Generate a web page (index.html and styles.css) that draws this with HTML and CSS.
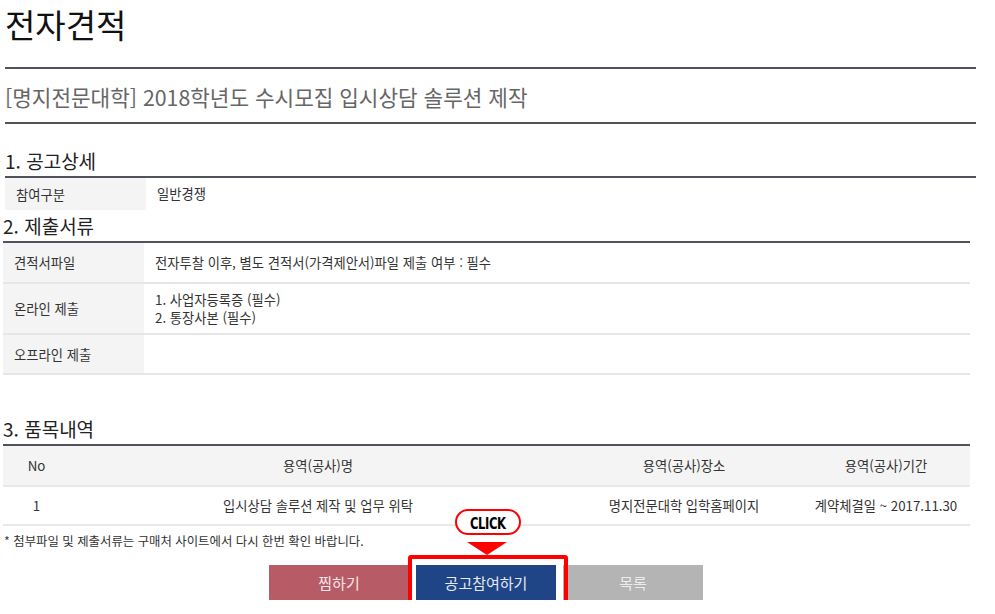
FILE: index.html
```
<!DOCTYPE html>
<html lang="ko">
	<head>
		<meta charset="utf-8" />
		<meta name="viewport" content="width=device-width, initial-scale=1.0" />
		<title>전자견적</title>
		<link rel="stylesheet" href="styles.css">
	</head>

	<body>
		<div class="page">
			<h1 class="title">전자견적</h1>
			<div class="subject">[명지전문대학] 2018학년도 수시모집 입시상담 솔루션 제작</div>

			<!-- 1. 공고상세 -->
			<section class="sec sec1">
				<h2>1. 공고상세</h2>
				<div class="row row-plain">
					<div class="label">참여구분</div>
					<div class="value">일반경쟁</div>
				</div>
			</section>

			<!-- 2. 제출서류 -->
			<section class="sec sec2">
				<h2>2. 제출서류</h2>
				<div class="row r1">
					<div class="label">견적서파일</div>
					<div class="value">전자투찰 이후, 별도 견적서(가격제안서)파일 제출 여부 : 필수</div>
				</div>
				<div class="row r2">
					<div class="label">온라인 제출</div>
					<div class="value">1. 사업자등록증 (필수)<br />2. 통장사본 (필수)</div>
				</div>
				<div class="row r3">
					<div class="label">오프라인 제출</div>
					<div class="value"></div>
				</div>
			</section>

			<!-- 3. 품목내역 -->
			<section class="sec sec3">
				<h2>3. 품목내역</h2>
				<div class="items">
					<div class="irow ihead">
						<div>No</div>
						<div>용역(공사)명</div>
						<div>용역(공사)장소</div>
						<div>용역(공사)기간</div>
					</div>
					<div class="irow">
						<div>1</div>
						<div>입시상담 솔루션 제작 및 업무 위탁</div>
						<div>명지전문대학 입학홈페이지</div>
						<div>계약체결일 ~ 2017.11.30</div>
					</div>
				</div>
			</section>

			<p class="note">* 첨부파일 및 제출서류는 구매처 사이트에서 다시 한번 확인 바랍니다.</p>

			<div class="buttons">
				<button class="btn btn-zzim">찜하기</button>
				<div class="click-wrap">
					<button class="btn btn-join">공고참여하기</button>
					<span class="frame"></span>
					<span class="pill"><span class="pill-text">CLICK</span></span>
					<span class="arrow"></span>
				</div>
				<button class="btn btn-list">목록</button>
			</div>
		</div>
	</body>
</html>
```

FILE: styles.css
```
body {
	margin: 0;
	font-family: "Noto Sans CJK KR", "Noto Sans", sans-serif;
	color: #333;
	background: #fff;
}

.page {
	width: 980px;
	position: relative;
}

.title {
	margin: 0 0 0 5px;
	padding-top: 2px;
	font-size: 33px;
	line-height: 44px;
	font-weight: normal;
	color: #111;
}

.subject {
	margin: 21px 0 0 5px;
	width: 971px;
	height: 53px;
	line-height: 55px;
	border-top: 2px solid #50535b;
	border-bottom: 2px solid #50535b;
	font-size: 21.3px;
	color: #666;
}

.sec h2 {
	margin: 0;
	font-size: 19px;
	line-height: 28px;
	font-weight: normal;
	color: #222;
	padding-bottom: 1px;
	border-bottom: 2px solid #50535b;
}

.sec1 {
	margin: 23px 0 0 5px;
	width: 971px;
}

.sec2 {
	margin: 2px 0 0 3px;
	width: 967px;
}

.sec3 {
	margin: 40px 0 0 3px;
	width: 967px;
}

.row {
	display: grid;
	grid-template-columns: 141px 1fr;
	font-size: 13.3px;
	border-bottom: 2px solid #e6e6e6;
}

.row-plain {
	border-bottom: none;
	height: 32px;
}

.r1 {
	height: 39px;
}

.r2 {
	height: 49px;
}

.r3 {
	height: 38px;
}

.label {
	background: #f4f4f4;
	padding-left: 11px;
	display: flex;
	align-items: center;
}

.value {
	padding-left: 11px;
	display: flex;
	align-items: center;
	line-height: 18px;
}

.items {
	font-size: 13.3px;
}

.irow {
	display: grid;
	grid-template-columns: 67px 496px 236px 168px;
	height: 39px;
	align-items: center;
	text-align: center;
	border-bottom: 2px solid #e8e8e8;
}

.irow:last-child {
	height: 37px;
}

.ihead {
	background: #f4f4f4;
}

.note {
	margin: 6px 0 0 4px;
	font-size: 12.4px;
	line-height: 18px;
	color: #333;
}

.buttons {
	display: flex;
	gap: 7px;
	margin: 15px 0 0 269px;
}

.btn {
	width: 140px;
	height: 35px;
	border: none;
	font-family: inherit;
	font-size: 15px;
	padding: 0;
}

.btn-zzim {
	background: #b75c66;
	color: #f6e6e8;
}

.btn-join {
	background: #1f4587;
	color: #e4e9f4;
}

.btn-list {
	background: #b4b4b4;
	color: #ececec;
}

.click-wrap {
	position: relative;
	width: 140px;
	height: 35px;
}

.frame {
	position: absolute;
	left: -8px;
	right: -12px;
	top: -10px;
	bottom: -9px;
	border: 4px solid #f00;
	border-radius: 3px;
}

.pill {
	position: absolute;
	left: 39px;
	top: -56px;
	width: 66px;
	height: 26px;
	box-sizing: border-box;
	border: 2px solid #f00;
	border-radius: 13px;
	background: #fff;
	text-align: center;
	line-height: 22px;
}

.pill-text {
	display: inline-block;
	color: #000;
	font-family: "DejaVu Sans", sans-serif;
	font-weight: bold;
	font-size: 16px;
	letter-spacing: -0.5px;
	transform: scaleX(0.72);
}

.arrow {
	position: absolute;
	left: 51px;
	top: -23px;
	width: 0;
	height: 0;
	border-left: 20px solid transparent;
	border-right: 20px solid transparent;
	border-top: 13px solid #f00;
}
```
